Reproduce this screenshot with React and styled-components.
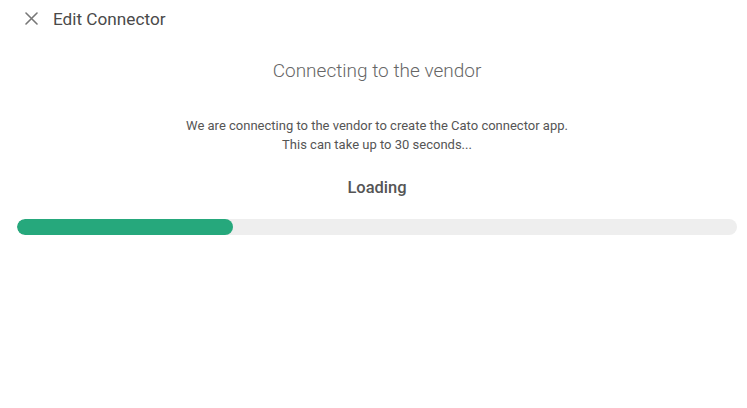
import styled, { createGlobalStyle } from "styled-components";

const GlobalStyle = createGlobalStyle`
  body {
    margin: 0;
    background: #ffffff;
    font-family: Roboto, "Liberation Sans", sans-serif;
  }
`;

const Page = styled.div`
  display: flex;
  flex-direction: column;
  width: 747px;
  height: 408px;
  background: #fff;
`;

const Header = styled.div`
  display: flex;
  align-items: center;
  height: 37px;
  padding-left: 24px;
  gap: 15px;
`;

const CloseButton = styled.button`
  display: flex;
  align-items: center;
  justify-content: center;
  width: 14px;
  height: 14px;
  padding: 0;
  border: none;
  background: none;
  cursor: pointer;
`;

const HeaderTitle = styled.h1`
  margin: 0;
  font-size: 17.2px;
  font-weight: 400;
  color: #4a4a4a;
`;

const Body = styled.div`
  display: flex;
  flex-direction: column;
  align-items: center;
  padding: 22px 10px 0 17px;
`;

const Title = styled.h2`
  margin: 0;
  font-size: 19px;
  font-weight: 300;
  color: #666;
  line-height: 24px;
`;

const Description = styled.p`
  margin: 33px 0 0;
  font-size: 13px;
  line-height: 19px;
  color: #555;
  text-align: center;
`;

const Status = styled.div`
  margin-top: 24px;
  font-size: 16.5px;
  font-weight: 500;
  color: #555;
  line-height: 20px;
`;

const Track = styled.div`
  align-self: stretch;
  margin-top: 21px;
  height: 16px;
  border-radius: 8px;
  background: #eeeeee;
  overflow: hidden;
`;

const Fill = styled.div`
  height: 100%;
  border-radius: 8px;
  background: #26a87c;
`;

function App() {
  const progress = 30;

  return (
    <>
      <GlobalStyle />
      <Page>
        <Header>
          <CloseButton aria-label="close">
            <svg width="13" height="13" viewBox="0 0 13 13">
              <path
                d="M1 1L12 12M12 1L1 12"
                stroke="#777"
                strokeWidth="1.6"
                strokeLinecap="round"
              />
            </svg>
          </CloseButton>
          <HeaderTitle>Edit Connector</HeaderTitle>
        </Header>
        <Body>
          <Title>Connecting to the vendor</Title>
          <Description>
            We are connecting to the vendor to create the Cato connector app.
            <br />
            This can take up to 30 seconds...
          </Description>
          <Status>Loading</Status>
          <Track>
            <Fill style={{ width: `${progress}%` }} />
          </Track>
        </Body>
      </Page>
    </>
  );
}

export default App;
